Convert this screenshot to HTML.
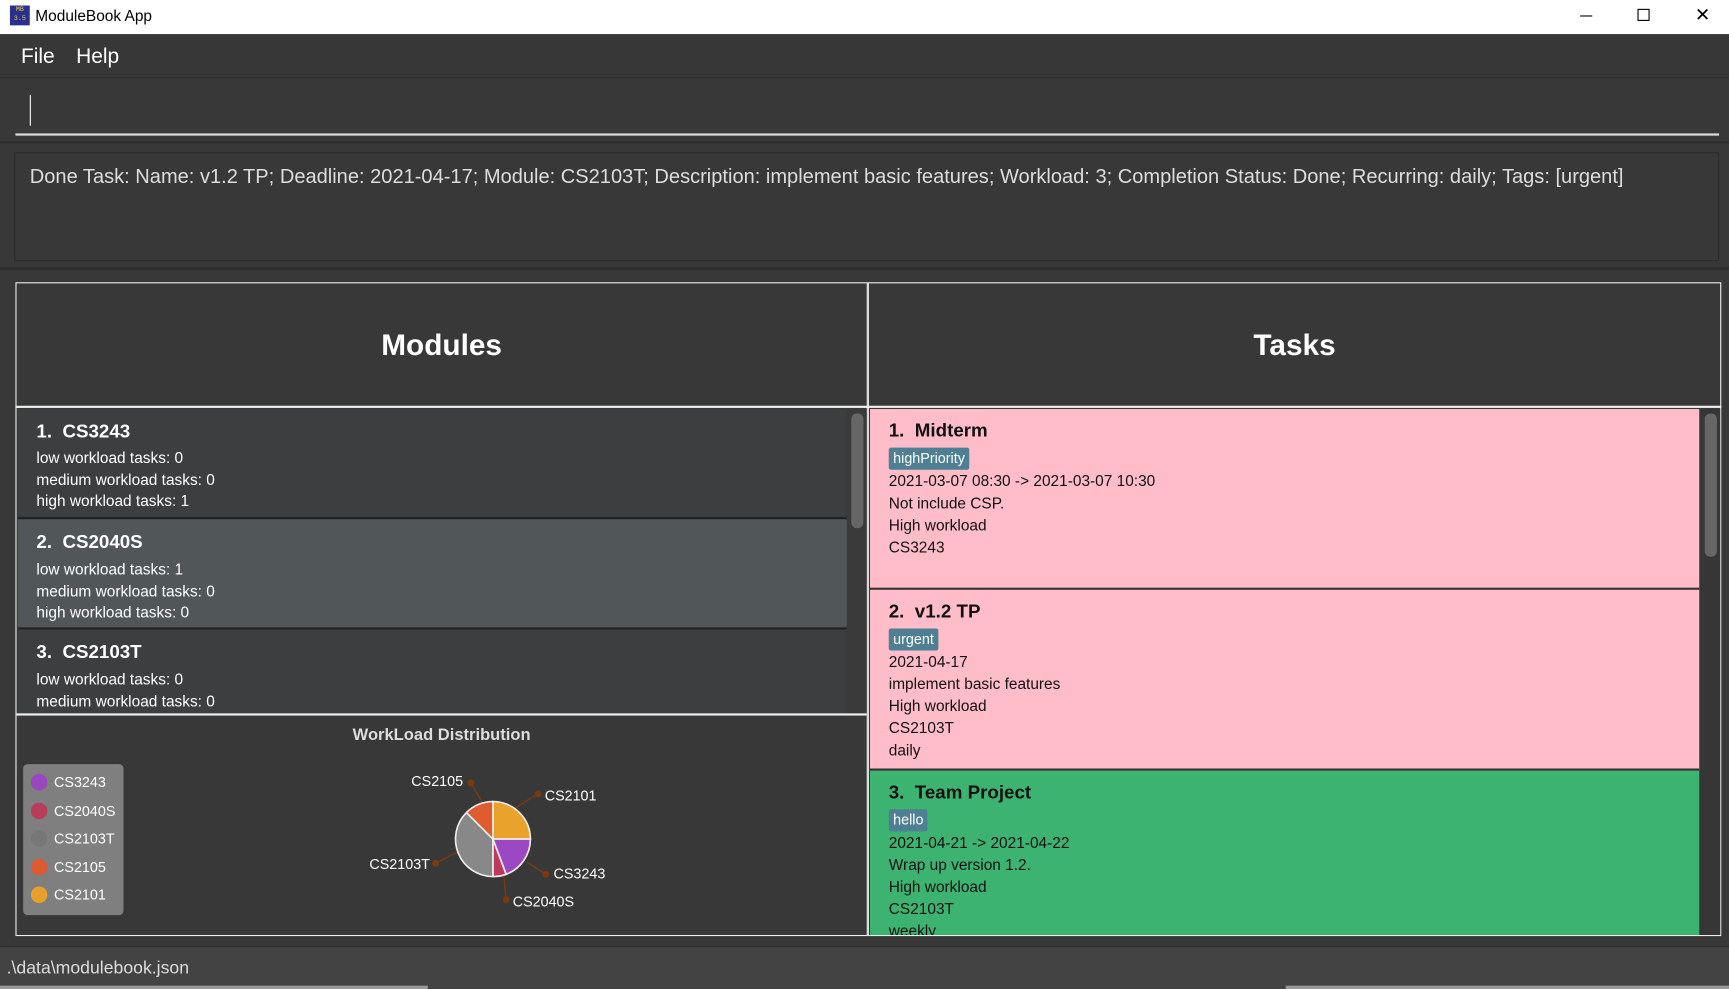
<!DOCTYPE html>
<html><head><meta charset="utf-8"><style>
*{margin:0;padding:0;box-sizing:border-box}
html,body{width:1729px;height:989px;overflow:hidden;background:#383838}
#w{position:absolute;left:0;top:0;width:1568px;height:897px;transform:scale(1.10268,1.10256);transform-origin:0 0;font-family:"Liberation Sans",sans-serif;background:#383838}
.a{position:absolute}
.t{color:#fff;white-space:nowrap}
.card{position:absolute;left:16px;width:752px;background:#3c3e3f;border-bottom:2px solid #222}
.card .h{position:absolute;left:17px;top:11px;font-size:17px;font-weight:bold;color:#fff}
.card .l{position:absolute;left:17px;font-size:14px;color:#fff}
.tk{position:absolute;left:789px;width:752px;border-bottom:2px solid #333}
.tk .h{position:absolute;left:17px;top:10px;font-size:17px;font-weight:bold;color:#111}
.tk .l{position:absolute;left:17px;font-size:14px;color:#111}
.tag{position:absolute;left:17px;background:#4e7f93;color:#fff;font-size:13px;padding:1px 4px;border-radius:2px;height:20px;line-height:18px}
</style></head><body><div id="w">
<div class="a" style="left:0;top:0;width:1568px;height:31px;background:#fff"></div>
<div class="a" style="left:9px;top:5px;width:18px;height:18px;background:#2b2f8e;color:#e8d84a;font-size:6px;line-height:8px;text-align:center;font-family:'Liberation Mono',monospace">MB<br>3.5</div>
<div class="a" style="left:32px;top:6px;font-size:14px;color:#000">ModuleBook App</div>
<div class="a" style="left:1433px;top:14px;width:11px;height:1px;background:#000"></div>
<div class="a" style="left:1485px;top:8px;width:11px;height:11px;border:1px solid #000"></div>
<div class="a" style="left:1537px;top:4px;font-size:17px;color:#000">✕</div>
<div class="a" style="left:0;top:31px;width:1568px;height:40px;background:#373737;border-bottom:1px solid #2e2e2e"></div>
<div class="a t" style="left:19px;top:41px;font-size:19px">File</div>
<div class="a t" style="left:69px;top:41px;font-size:19px">Help</div>
<div class="a" style="left:27px;top:86px;width:1px;height:28px;background:#fff"></div>
<div class="a" style="left:14px;top:121px;width:1545px;height:2px;background:#ddd"></div>
<div class="a" style="left:0;top:128px;width:1568px;height:2px;background:#2e2e2e"></div>
<div class="a" style="left:13px;top:138px;width:1546px;height:99px;border:1px solid #2b2b2b;background:#383838"></div>
<div class="a t" style="left:27px;top:150px;font-size:18.2px;color:#ddd">Done Task: Name: v1.2 TP; Deadline: 2021-04-17; Module: CS2103T; Description: implement basic features; Workload: 3; Completion Status: Done; Recurring: daily; Tags: [urgent]</div>
<div class="a" style="left:0;top:242px;width:1568px;height:3px;background:#2e2e2e"></div>
<div class="a" style="left:14px;top:256px;width:773px;height:593px;border:1px solid #eee"></div>
<div class="a" style="left:787px;top:256px;width:774px;height:593px;border:1px solid #eee"></div>
<div class="a" style="left:14px;top:368px;width:1547px;height:2px;background:#eee"></div>
<div class="a t" style="left:14px;top:298px;width:773px;text-align:center;font-size:27px;font-weight:bold">Modules</div>
<div class="a t" style="left:787px;top:298px;width:774px;text-align:center;font-size:27px;font-weight:bold">Tasks</div>
<div class="card" style="top:371px;height:100px"><div class="h">1.&nbsp; CS3243</div><div class="l" style="top:36px">low workload tasks: 0</div><div class="l" style="top:56px">medium workload tasks: 0</div><div class="l" style="top:75px">high workload tasks: 1</div></div>
<div class="card" style="top:471px;height:100px;background:#515658"><div class="h">2.&nbsp; CS2040S</div><div class="l" style="top:37px">low workload tasks: 1</div><div class="l" style="top:57px">medium workload tasks: 0</div><div class="l" style="top:76px">high workload tasks: 0</div></div>
<div class="card" style="top:571px;height:77px;border:none"><div class="h">3.&nbsp; CS2103T</div><div class="l" style="top:37px">low workload tasks: 0</div><div class="l" style="top:57px">medium workload tasks: 0</div></div>
<div class="a" style="left:768px;top:371px;width:18px;height:277px;background:#3a3a3a"></div>
<div class="a" style="left:772px;top:375px;width:11px;height:104px;background:#666;border-radius:5px"></div>
<div class="a" style="left:15px;top:647px;width:771px;height:2px;background:#eee"></div>
<div class="a t" style="left:14px;top:658px;width:773px;text-align:center;font-size:15px;font-weight:bold;color:#ddd">WorkLoad Distribution</div>
<div class="a" style="left:21px;top:693px;width:91px;height:137px;background:#7f7f7f;border-radius:4px"></div>
<div class="a" style="left:28px;top:697px;font-size:13px;color:#fff;line-height:25.5px">
<div><span style="display:inline-block;width:15px;height:15px;border-radius:50%;background:#9a46c0;vertical-align:-3px;margin-right:6px"></span>CS3243</div>
<div><span style="display:inline-block;width:15px;height:15px;border-radius:50%;background:#b83c5c;vertical-align:-3px;margin-right:6px"></span>CS2040S</div>
<div><span style="display:inline-block;width:15px;height:15px;border-radius:50%;background:#777;vertical-align:-3px;margin-right:6px"></span>CS2103T</div>
<div><span style="display:inline-block;width:15px;height:15px;border-radius:50%;background:#dd5a32;vertical-align:-3px;margin-right:6px"></span>CS2105</div>
<div><span style="display:inline-block;width:15px;height:15px;border-radius:50%;background:#e8a02a;vertical-align:-3px;margin-right:6px"></span>CS2101</div>
</div>
<svg class="a" style="left:300px;top:690px" width="280" height="140" viewBox="300 690 280 140">
<g stroke="#7a3a10" stroke-width="1.2" fill="#7a3a10">
<line x1="437" y1="727" x2="427" y2="710"/><circle cx="427" cy="710" r="2.5"/>
<line x1="465" y1="734" x2="488" y2="720"/><circle cx="488" cy="720" r="2.5"/>
<line x1="395" y1="783" x2="418" y2="771"/><circle cx="395" cy="783" r="2.5"/>
<line x1="478" y1="782" x2="495" y2="793"/><circle cx="495" cy="793" r="2.5"/>
<line x1="457" y1="795" x2="459" y2="816"/><circle cx="459" cy="816" r="2.5"/>
</g>
<g stroke="#eee" stroke-width="1.5">
<path d="M447,761 L447,727 A34,34 0 0 1 481,761 Z" fill="#e9a22c"/>
<path d="M447,761 L481,761 A34,34 0 0 1 459,793 Z" fill="#9c48c2"/>
<path d="M447,761 L459,793 A34,34 0 0 1 447,795 Z" fill="#bb3b5d"/>
<path d="M447,761 L447,795 A34,34 0 0 1 423,737 Z" fill="#888"/>
<path d="M447,761 L423,737 A34,34 0 0 1 447,727 Z" fill="#df5b30"/>
</g>
<g fill="#fff" font-size="13" font-family="Liberation Sans">
<text x="373" y="713">CS2105</text><text x="494" y="726">CS2101</text>
<text x="335" y="788">CS2103T</text><text x="502" y="797">CS3243</text><text x="465" y="822">CS2040S</text></g>
</svg>
<div class="tk" style="top:371px;height:164px;background:#ffbcc9"><div class="h">1.&nbsp; Midterm</div><div class="tag" style="top:35px">highPriority</div><div class="l" style="top:57px">2021-03-07 08:30 -&gt; 2021-03-07 10:30</div><div class="l" style="top:77px">Not include CSP.</div><div class="l" style="top:97px">High workload</div><div class="l" style="top:117px">CS3243</div></div>
<div class="tk" style="top:535px;height:164px;background:#ffbcc9"><div class="h">2.&nbsp; v1.2 TP</div><div class="tag" style="top:35px">urgent</div><div class="l" style="top:57px">2021-04-17</div><div class="l" style="top:77px">implement basic features</div><div class="l" style="top:97px">High workload</div><div class="l" style="top:117px">CS2103T</div><div class="l" style="top:137px">daily</div></div>
<div class="tk" style="top:699px;height:149px;background:#3cb371;border:none;overflow:hidden"><div class="h">3.&nbsp; Team Project</div><div class="tag" style="top:35px">hello</div><div class="l" style="top:57px">2021-04-21 -&gt; 2021-04-22</div><div class="l" style="top:77px">Wrap up version 1.2.</div><div class="l" style="top:97px">High workload</div><div class="l" style="top:117px">CS2103T</div><div class="l" style="top:137px">weekly</div></div>
<div class="a" style="left:1542px;top:371px;width:18px;height:477px;background:#363636"></div>
<div class="a" style="left:1546px;top:375px;width:11px;height:130px;background:#666;border-radius:5px"></div>
<div class="a" style="left:0;top:858px;width:1568px;height:39px;background:#434343;border-top:1px solid #2e2e2e"></div>
<div class="a t" style="left:6px;top:870px;font-size:16px;color:#ddd">.\data\modulebook.json</div>
<div class="a" style="left:0;top:894px;width:388px;height:3px;background:#999"></div>
<div class="a" style="left:1166px;top:894px;width:402px;height:3px;background:#999"></div>
</div></body></html>
